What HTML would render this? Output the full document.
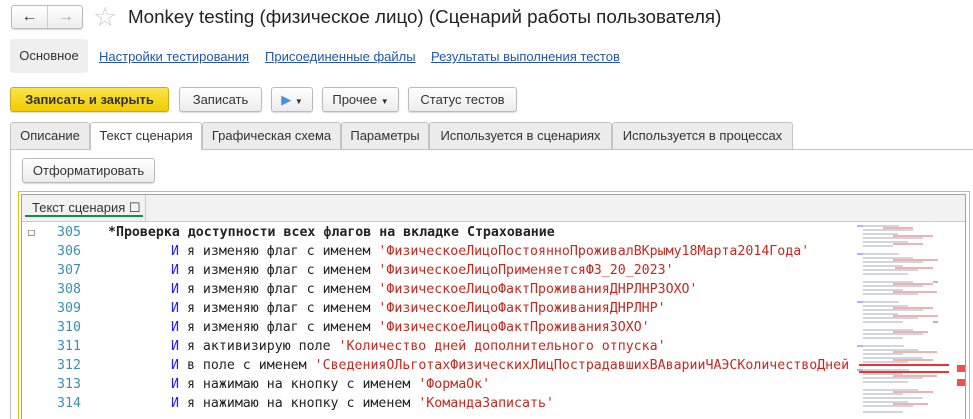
<!DOCTYPE html>
<html><head><meta charset="utf-8"><style>
*{margin:0;padding:0;box-sizing:border-box}
html,body{width:973px;height:419px;overflow:hidden}
body{background:#fff;font-family:"Liberation Sans",Arial,sans-serif;font-size:13px;color:#333;position:relative}
.a{position:absolute}
.btn{position:absolute;border:1px solid #bbb;border-radius:3px;background:linear-gradient(#fff,#ececec);box-shadow:0 1px 1px rgba(0,0,0,.15);text-align:center;line-height:23px;font-size:13px;color:#333}
.lnk{position:absolute;top:49px;color:#2255aa;text-decoration:underline;font-size:13px}
.tab{position:absolute;top:122px;height:27px;border:1px solid #c4c4c4;border-bottom:none;background:#ececec;border-radius:3px 3px 0 0;line-height:25px;text-align:center;font-size:13px;color:#333}
.L{position:absolute;left:0;height:19px;width:850px;font-family:"DejaVu Sans Mono","Liberation Mono",monospace;font-size:13.25px;line-height:19px;white-space:pre;color:#222;overflow:hidden}
.L .n{position:absolute;left:57px;color:#3a8fb0}
.L .t{position:absolute;left:171px}
.k{color:#2020ff}.s{color:#c8281e}
</style></head><body>
<div class="btn" style="left:11px;top:5px;width:72px;height:24px;padding:0"><span style="position:absolute;left:0;width:36px;border-right:1px solid #ccc;height:22px;font-size:16px;line-height:21px">&#8592;</span><span style="position:absolute;left:36px;width:36px;height:22px;color:#aaa;font-size:16px;line-height:21px">&#8594;</span></div>
<div class="a" style="left:93px;top:2px;font-size:27px;color:#ccc;line-height:30px">&#9734;</div>
<div class="a" style="left:128px;top:5px;font-size:18.8px;color:#222;line-height:24px">Monkey testing (физическое лицо) (Сценарий работы пользователя)</div>
<div class="a" style="left:10px;top:39px;width:78px;height:34px;background:#efefef;border-radius:3px;line-height:34px;text-align:center;color:#333">Основное</div>
<span class="lnk" style="left:99px">Настройки тестирования</span>
<span class="lnk" style="left:265px">Присоединенные файлы</span>
<span class="lnk" style="left:431px">Результаты выполнения тестов</span>
<div class="btn" style="left:10px;top:87px;width:159px;height:25px;background:linear-gradient(#fbe44a,#f1cd00);border-color:#c9ad16;font-weight:bold;color:#333">Записать и закрыть</div>
<div class="btn" style="left:179px;top:87px;width:83px;height:25px">Записать</div>
<div class="btn" style="left:271px;top:87px;width:42px;height:25px"><span style="color:#4a90e2;font-size:13px">&#9654;</span> <span style="font-size:8px">&#9660;</span></div>
<div class="btn" style="left:322px;top:87px;width:77px;height:25px">Прочее <span style="font-size:8px">&#9660;</span></div>
<div class="btn" style="left:408px;top:87px;width:109px;height:25px">Статус тестов</div>
<div class="a" style="left:10px;top:149px;width:963px;height:1px;background:#c4c4c4"></div>
<div class="a" style="left:10px;top:149px;width:1px;height:270px;background:#c4c4c4"></div>
<div class="tab" style="left:10px;width:80px">Описание</div>
<div class="tab" style="left:90px;width:112px;background:#fff;height:28px">Текст сценария</div>
<div class="tab" style="left:202px;width:139px">Графическая схема</div>
<div class="tab" style="left:341px;width:88px">Параметры</div>
<div class="tab" style="left:429px;width:183px">Используется в сценариях</div>
<div class="tab" style="left:612px;width:181px">Используется в процессах</div>
<div class="btn" style="left:22px;top:158px;width:133px;height:25px">Отформатировать</div>
<div class="a" style="left:18px;top:191px;width:952px;height:240px;border:1px solid #f0c000"></div>
<div class="a" style="left:21px;top:194px;width:945px;height:240px;border:1px solid #a0a0a0"></div>
<div class="a" style="left:22px;top:195px;width:943px;height:27px;background:#f2f2f2;border-bottom:1px solid #ccc"></div>
<div class="a" style="left:22px;top:195px;width:124px;height:27px;border-right:1px solid #ccc;line-height:25px;padding-left:10px;color:#333">Текст сценария &#9744;</div>
<div class="a" style="left:25px;top:215px;width:118px;height:2px;background:#109040"></div>
<div class="a" style="left:0;top:223px;width:853px;height:196px;overflow:hidden">
<div class="L" style="top:0"><span style="position:absolute;left:28px;font-size:12px">&#9744;</span><span class="n">305</span><b style="position:absolute;left:108px">*Проверка доступности всех флагов на вкладке Страхование</b></div>
<div class="L" style="top:19px"><span class="n">306</span><span class="t"><span class="k">И</span> я изменяю флаг с именем <span class="s">'ФизическоеЛицоПостоянноПроживалВКрыму18Марта2014Года'</span></span></div>
<div class="L" style="top:38px"><span class="n">307</span><span class="t"><span class="k">И</span> я изменяю флаг с именем <span class="s">'ФизическоеЛицоПрименяетсяФЗ_20_2023'</span></span></div>
<div class="L" style="top:57px"><span class="n">308</span><span class="t"><span class="k">И</span> я изменяю флаг с именем <span class="s">'ФизическоеЛицоФактПроживанияДНРЛНРЗОХО'</span></span></div>
<div class="L" style="top:76px"><span class="n">309</span><span class="t"><span class="k">И</span> я изменяю флаг с именем <span class="s">'ФизическоеЛицоФактПроживанияДНРЛНР'</span></span></div>
<div class="L" style="top:95px"><span class="n">310</span><span class="t"><span class="k">И</span> я изменяю флаг с именем <span class="s">'ФизическоеЛицоФактПроживанияЗОХО'</span></span></div>
<div class="L" style="top:114px"><span class="n">311</span><span class="t"><span class="k">И</span> я активизирую поле <span class="s">'Количество дней дополнительного отпуска'</span></span></div>
<div class="L" style="top:133px"><span class="n">312</span><span class="t"><span class="k">И</span> в поле с именем <span class="s">'СведенияОЛьготахФизическихЛицПострадавшихВАварииЧАЭСКоличествоДней</span></span></div>
<div class="L" style="top:152px"><span class="n">313</span><span class="t"><span class="k">И</span> я нажимаю на кнопку с именем <span class="s">'ФормаОк'</span></span></div>
<div class="L" style="top:171px"><span class="n">314</span><span class="t"><span class="k">И</span> я нажимаю на кнопку с именем <span class="s">'КомандаЗаписать'</span></span></div>
<div class="L" style="top:190px"><span style="position:absolute;left:28px;font-size:12px">&#9744;</span></div>
</div>
<div class="a" style="left:853px;top:222px;width:100px;height:197px;background:#fff;overflow:hidden">
<svg width="100" height="197"><g stroke-width="1">
<g stroke="#aab">
<path d="M6 4h40M10 8h50M10 12h35M10 16h60M10 20h45M10 24h30M6 32h40M10 36h50M10 40h60M10 44h40M10 48h55M10 52h45M10 60h50M10 64h60M10 68h40M10 72h55M6 80h40M10 84h45M10 88h60M10 92h35M10 96h55M10 100h40M10 108h50M10 112h60M10 116h40M6 124h45M10 128h55M10 132h40M10 136h60M10 140h45M6 148h50M10 152h40M10 156h60M10 160h45M10 168h55M10 172h40M10 176h60M10 180h45M10 184h50M10 190h40"/></g>
<g stroke="#d66"><path d="M30 6h30M40 14h40M40 22h30M40 38h45M42 46h38M40 62h40M40 70h44M40 86h40M40 94h45M40 110h35M40 130h44M40 138h40M40 154h44M40 170h40M40 182h35"/></g>
<g stroke="#66d"><path d="M4 4h6M4 32h6M4 80h6M4 124h6M4 148h6M80 60h5M80 100h5"/></g>
<path d="M6 143h90" stroke="#e33" stroke-width="2"/><path d="M6 150h90" stroke="#e33" stroke-width="2"/></g></svg></div>
<div class="a" style="left:957px;top:365px;width:8px;height:7px;background:#f05050"></div>
<div class="a" style="left:957px;top:379px;width:8px;height:7px;background:#f05050"></div>
</body></html>
